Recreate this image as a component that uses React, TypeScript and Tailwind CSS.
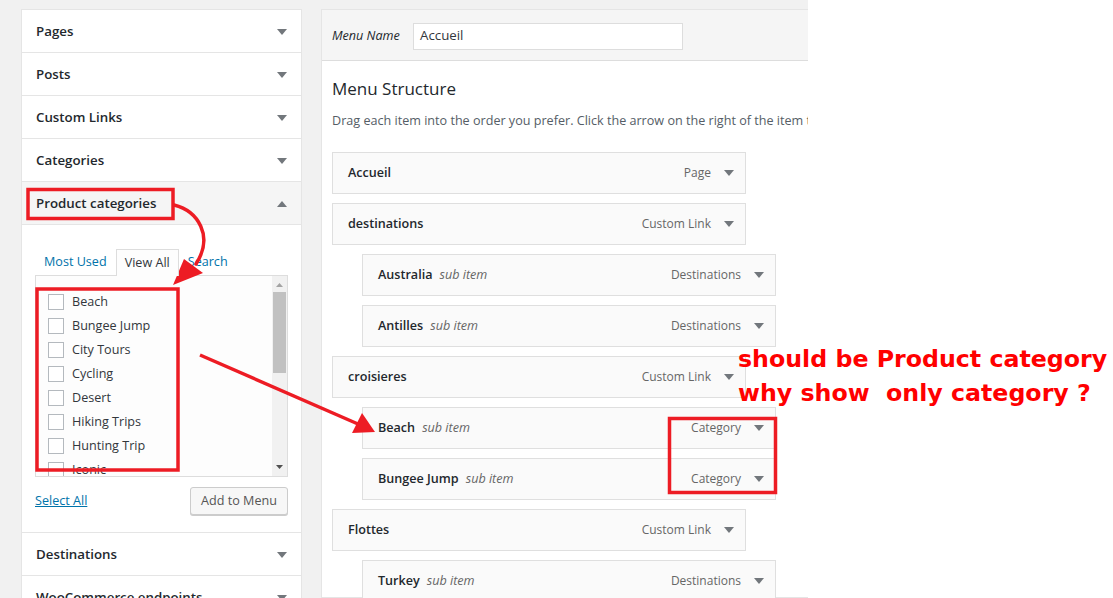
import React from 'react';

const UI_FONT = { fontFamily: '"Segoe UI", "Open Sans", sans-serif' };

type MenuItem = {
  title: string;
  type: string;
  sub?: boolean;
};

const menuItems: MenuItem[] = [
  { title: 'Accueil', type: 'Page' },
  { title: 'destinations', type: 'Custom Link' },
  { title: 'Australia', type: 'Destinations', sub: true },
  { title: 'Antilles', type: 'Destinations', sub: true },
  { title: 'croisieres', type: 'Custom Link' },
  { title: 'Beach', type: 'Category', sub: true },
  { title: 'Bungee Jump', type: 'Category', sub: true },
  { title: 'Flottes', type: 'Custom Link' },
  { title: 'Turkey', type: 'Destinations', sub: true },
];

const categories = ['Beach', 'Bungee Jump', 'City Tours', 'Cycling', 'Desert', 'Hiking Trips', 'Hunting Trip', 'Iconic'];

function Caret({ up = false }: { up?: boolean }) {
  return (
    <svg width="10" height="6" viewBox="0 0 10 6" className="shrink-0">
      {up ? <path d="M0 6h10L5 0z" fill="#72777c" /> : <path d="M0 0h10L5 6z" fill="#72777c" />}
    </svg>
  );
}

function SectionHeader({ label, open = false }: { label: string; open?: boolean }) {
  return (
    <div
      className={`flex h-[43px] shrink-0 items-center justify-between border-b border-[#e5e5e5] pl-[14px] pr-[14px] pt-[1px] ${
        open ? 'bg-[#f5f5f5]' : 'bg-white'
      }`}
    >
      <span className="text-[13.3px] font-semibold text-[#23282d]">{label}</span>
      <Caret up={open} />
    </div>
  );
}

function MenuRow({ item }: { item: MenuItem }) {
  return (
    <div
      className={`flex h-[42px] w-[414px] shrink-0 items-center border border-[#dfdfdf] bg-[#fafafa] pl-[15px] pr-[11px] pt-[1px] ${
        item.sub ? 'ml-[30px]' : ''
      }`}
    >
      <span className="text-[12.6px] font-semibold text-[#23282d]">{item.title}</span>
      {item.sub && <span className="ml-[7px] text-[12.6px] italic text-[#666]">sub item</span>}
      <span className="ml-auto mr-[13px] text-[12px] text-[#666]">{item.type}</span>
      <Caret />
    </div>
  );
}

function Annotations() {
  return (
    <svg className="pointer-events-none absolute inset-0" width="1113" height="598" viewBox="0 0 1113 598">
      <g fill="none" stroke="#ed1c24" strokeWidth="3.5">
        <rect x="28" y="189.5" width="145" height="29" />
        <rect x="37" y="289" width="141" height="181" />
        <rect x="669.5" y="418.5" width="106" height="74" />
        <path d="M174 205 C198 211, 214 236, 196 264" strokeLinecap="round" />
        <line x1="200" y1="355" x2="358" y2="424" />
      </g>
      <g fill="#ed1c24">
        <polygon points="173,285 184,259 203,273" />
        <polygon points="375,432 352,433 362,413" />
      </g>
    </svg>
  );
}

export default function App() {
  return (
    <div className="relative h-[598px] w-[1113px] overflow-hidden bg-white" style={UI_FONT}>
      <div className="flex h-full w-[808px] gap-[19px] overflow-hidden bg-[#f1f1f1] pl-[21px] pt-[9px]">
        {/* left accordion */}
        <div className="flex w-[281px] shrink-0 flex-col border border-[#e5e5e5] bg-white">
          <SectionHeader label="Pages" />
          <SectionHeader label="Posts" />
          <SectionHeader label="Custom Links" />
          <SectionHeader label="Categories" />
          <SectionHeader label="Product categories" open />

          <div className="flex h-[308px] shrink-0 flex-col border-b border-[#e5e5e5] px-[13px] pt-[24px]">
            <div className="flex h-[26px] items-stretch text-[12.6px]">
              <span className="flex items-center border border-transparent px-[8px] text-[#0073aa]">Most Used</span>
              <span className="relative z-10 -mb-px flex items-center border border-b-0 border-[#dddddd] bg-[#fdfdfd] px-[8px] text-[#32373c]">
                View All
              </span>
              <span className="flex items-center px-[9px] text-[#0073aa]">Search</span>
            </div>
            <div className="flex h-[202px] w-[253px] border border-[#dddddd] bg-[#fdfdfd]">
              <div className="flex flex-1 flex-col overflow-hidden pl-[12px] pt-[14px]">
                {categories.map((c) => (
                  <div key={c} className="flex h-[24px] shrink-0 items-center gap-[8px]">
                    <span className="h-[16px] w-[16px] shrink-0 border border-[#b4b9be] bg-white" />
                    <span className="text-[12.6px] text-[#32373c]">{c}</span>
                  </div>
                ))}
              </div>
              <div className="flex w-[15px] shrink-0 flex-col items-center bg-[#f1f1f1]">
                <svg width="7" height="4" viewBox="0 0 7 4" className="mt-[7px]">
                  <path d="M0 4h7L3.5 0z" fill="#a3a3a3" />
                </svg>
                <div className="mt-[5px] h-[81px] w-[13px] bg-[#c1c1c1]" />
                <svg width="7" height="4" viewBox="0 0 7 4" className="mb-[7px] mt-auto">
                  <path d="M0 0h7L3.5 4z" fill="#505050" />
                </svg>
              </div>
            </div>
            <div className="mt-[10px] flex items-center justify-between">
              <span className="text-[12.6px] text-[#0073aa] underline">Select All</span>
              <span className="flex h-[28px] w-[98px] items-center justify-center rounded-[3px] border border-[#cccccc] bg-[#f7f7f7] text-[12.6px] text-[#555] shadow-[0_1px_0_#cccccc]">
                Add to Menu
              </span>
            </div>
          </div>

          <SectionHeader label="Destinations" />
          <SectionHeader label="WooCommerce endpoints" />
        </div>

        {/* menu structure */}
        <div className="flex w-[600px] shrink-0 flex-col border border-[#e5e5e5] bg-white">
          <div className="flex h-[51px] shrink-0 items-center border-b border-[#dddddd] bg-[#f5f5f5] pl-[10px] pt-[2px]">
            <span className="w-[81px] text-[12.6px] italic text-[#23282d]">Menu Name</span>
            <div className="flex h-[27px] w-[270px] items-center border border-[#dddddd] bg-white pl-[6px] text-[13.3px] text-[#32373c]">
              Accueil
            </div>
          </div>
          <div className="flex flex-col pl-[10px] pt-[16px]">
            <h3 className="text-[17px] font-medium leading-[24px] text-[#23282d]">Menu Structure</h3>
            <p className="mt-[11px] whitespace-nowrap text-[12.6px] text-[#555d66]">
              Drag each item into the order you prefer. Click the arrow on the right of the item to reveal additional configuration options.
            </p>
            <div className="mt-[21px] flex flex-col gap-[9px]">
              {menuItems.map((m) => (
                <MenuRow key={m.title} item={m} />
              ))}
            </div>
          </div>
        </div>
      </div>

      <Annotations />

      <div
        className="absolute left-[738px] top-[342px] whitespace-pre text-[23.7px] font-bold leading-[34px] text-[#ff0000]"
        style={{ fontFamily: '"DejaVu Sans", Verdana, sans-serif' }}
      >
        {'should be Product category\nwhy show  only category ?'}
      </div>
    </div>
  );
}
